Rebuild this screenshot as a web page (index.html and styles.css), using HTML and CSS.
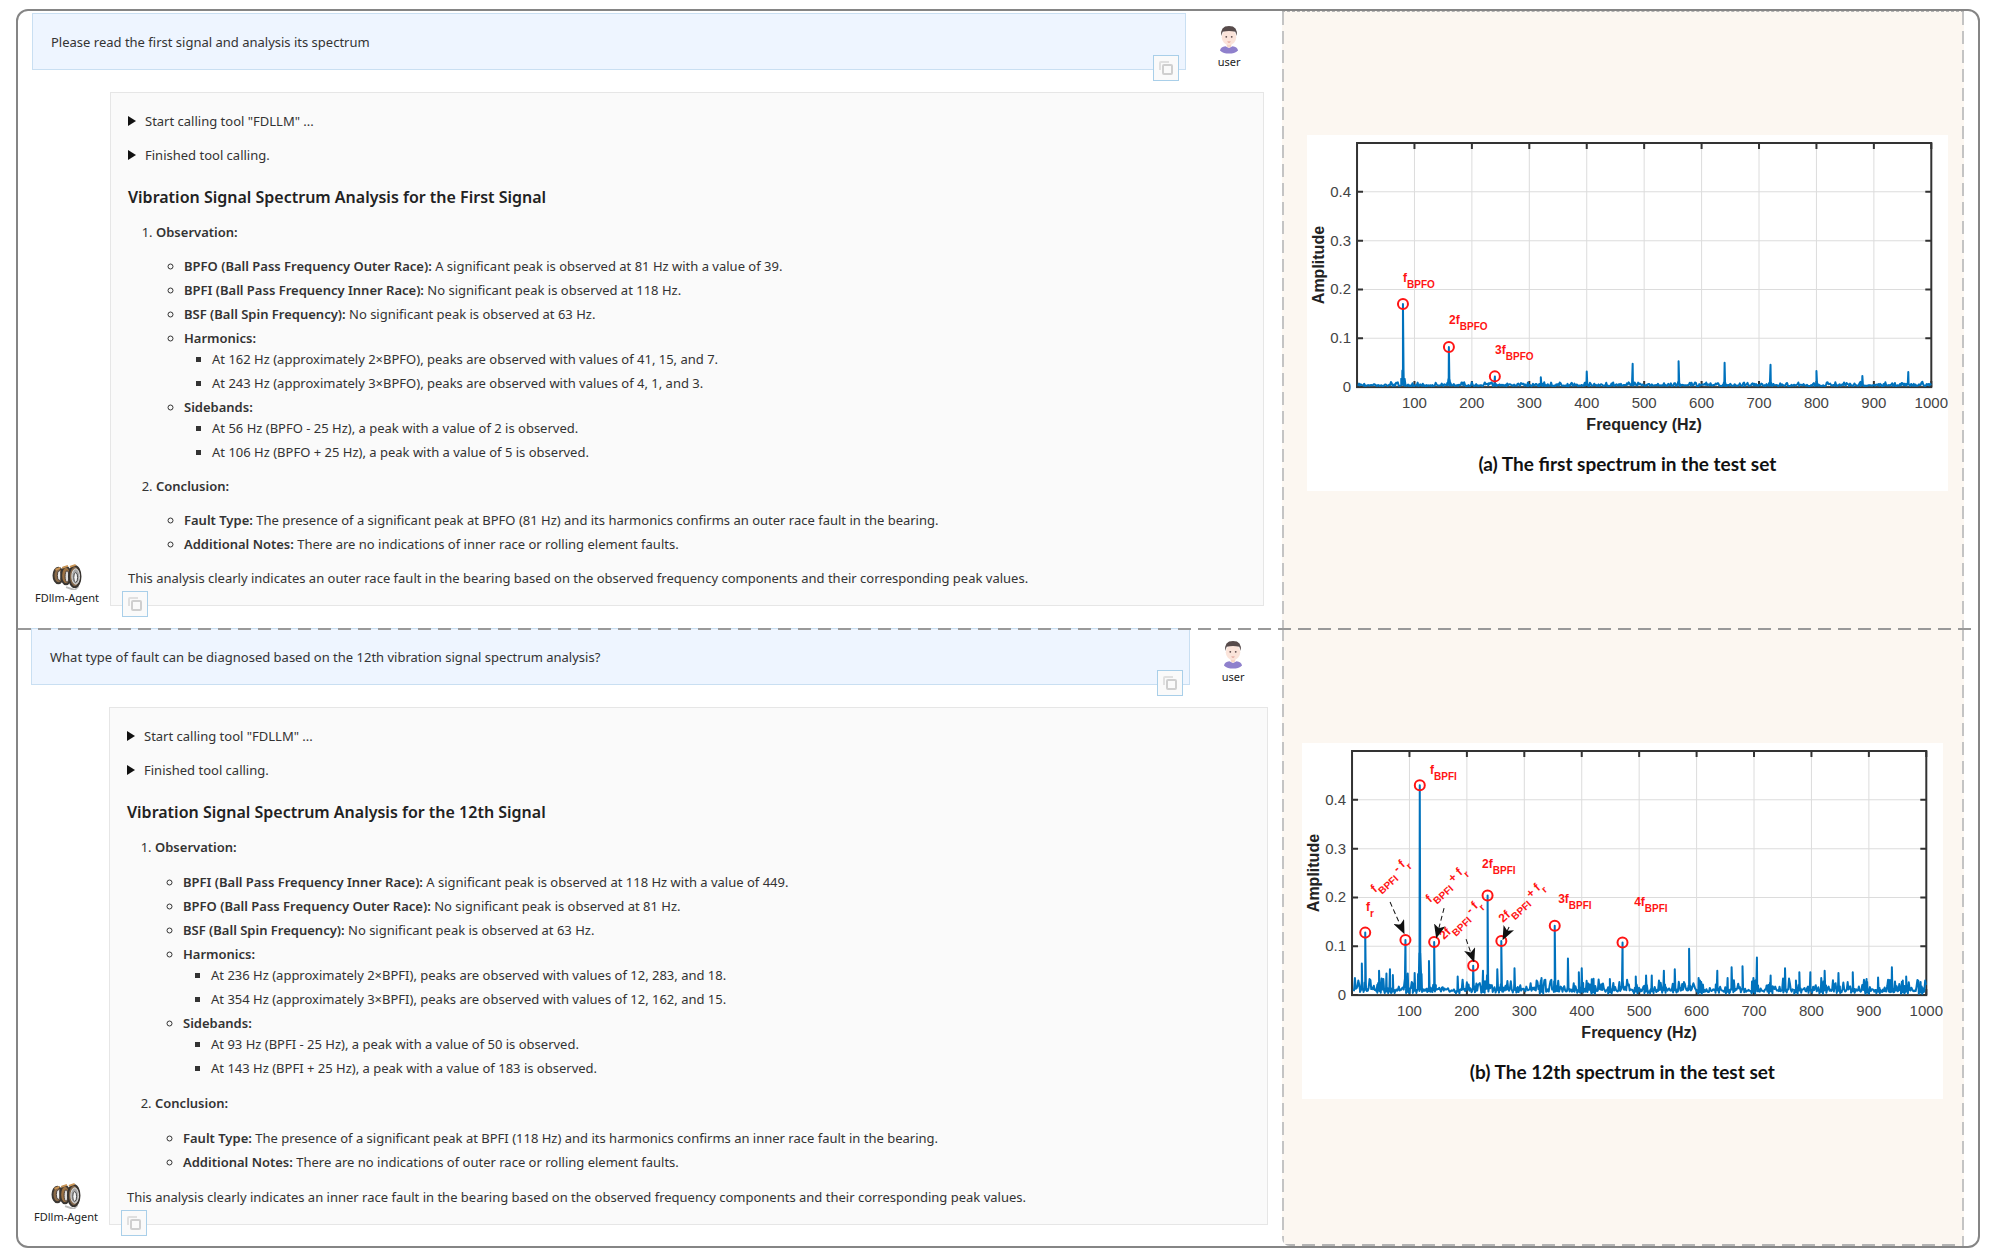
FILE: index.html
```
<!DOCTYPE html>
<html lang="en">
<head>
  <meta charset="UTF-8">
  <title>FDllm-Agent</title>
  <link rel="stylesheet" href="styles.css">
</head>
<body>

  <svg width="0" height="0" class="defs">
    <symbol id="copy" viewBox="0 0 24 24">
      <rect x="9" y="9" width="9" height="9" rx="1" fill="none" stroke="#cfcfcf" stroke-width="2"/>
      <path d="M6 14V7a1 1 0 0 1 1-1h8" fill="none" stroke="#e0e0e0" stroke-width="2"/>
    </symbol>
    <symbol id="person" viewBox="0 0 24 32">
      <path d="M2 28q1-4 6-4.500l4 2 4-2q5 .5 6 4.500-4 3.500-10 3.500t-10-3.500z" fill="#8f80cc"/>
      <path d="M9.500 19h5v4.500q-2.500 3-5 0z" fill="#f6d5c6"/>
      <ellipse cx="12" cy="13.500" rx="8" ry="8.500" fill="#fbe4da"/>
      <path d="M3.500 12Q2 1 12 1t8.500 11l-1.500-4.500q-7-1.500-14 0z" fill="#574b4b"/>
      <circle cx="9" cy="13" r="1" fill="#5d4c4c"/>
      <circle cx="15" cy="13" r="1" fill="#5d4c4c"/>
      <path d="M10.500 18.500q1.500 1 3 0" fill="none" stroke="#d88d83"/>
    </symbol>
    <symbol id="bearing" viewBox="0 0 32 28">
      <path d="M15 25l9 3 4-4" fill="none" stroke="#bbb" stroke-width="2"/>
      <ellipse cx="7" cy="13" rx="5" ry="8" fill="#8a6a48" stroke="#3b3733" stroke-width="2"/>
      <ellipse cx="8" cy="13" rx="2" ry="5" fill="#eee" stroke="#4b4039"/>
      <ellipse cx="15" cy="13" rx="5" ry="9" fill="#9c7142" stroke="#3b3733" stroke-width="2"/>
      <ellipse cx="16" cy="14" rx="2" ry="6" fill="#ddd" stroke="#4b4039"/>
      <ellipse cx="24" cy="14" rx="6" ry="11" fill="#80664b" stroke="#37332f" stroke-width="2"/>
      <ellipse cx="25" cy="14" rx="4" ry="8" fill="#a7a7a7" stroke="#ddd"/>
      <ellipse cx="25" cy="15" rx="2" ry="5" fill="#f4f4f4" stroke="#444"/>
      <path d="M4 7l5-2M11 5l6-2M19 4l6-2" stroke="#c99455" stroke-width="2"/>
    </symbol>
    <marker id="head" viewBox="0 0 12 10" markerWidth="14" markerHeight="12" refX="9" refY="5" orient="auto" markerUnits="userSpaceOnUse">
      <path d="M0 0l12 5-12 5 3-5z" fill="#111"/>
    </marker>
  </svg>

  <main class="frame">
    <section class="case first">
      <div class="chat">
        <div class="question">
          <div class="bubble">
            <p>Please read the first signal and analysis its spectrum</p>
            <button class="copy-btn" aria-label="Copy"><svg><use href="#copy"/></svg></button>
          </div>
          <div class="avatar user"><svg><use href="#person"/></svg><span>user</span></div>
        </div>
        <div class="reply">
          <div class="avatar agent"><svg><use href="#bearing"/></svg><span>FDllm-Agent</span></div>
          <article class="answer">
            <details><summary>Start calling tool "FDLLM" ...</summary></details>
            <details><summary>Finished tool calling.</summary></details>
            <h3>Vibration Signal Spectrum Analysis for the First Signal</h3>
            <ol>
              <li><b>Observation:</b>
                <ul>
                  <li><b>BPFO (Ball Pass Frequency Outer Race):</b> A significant peak is observed at 81 Hz with a value of 39.</li>
                  <li><b>BPFI (Ball Pass Frequency Inner Race):</b> No significant peak is observed at 118 Hz.</li>
                  <li><b>BSF (Ball Spin Frequency):</b> No significant peak is observed at 63 Hz.</li>
                  <li><b>Harmonics:</b>
                    <ul>
                      <li>At 162 Hz (approximately 2×BPFO), peaks are observed with values of 41, 15, and 7.</li>
                      <li>At 243 Hz (approximately 3×BPFO), peaks are observed with values of 4, 1, and 3.</li>
                    </ul>
                  </li>
                  <li><b>Sidebands:</b>
                    <ul>
                      <li>At 56 Hz (BPFO - 25 Hz), a peak with a value of 2 is observed.</li>
                      <li>At 106 Hz (BPFO + 25 Hz), a peak with a value of 5 is observed.</li>
                    </ul>
                  </li>
                </ul>
              </li>
              <li><b>Conclusion:</b>
                <ul>
                  <li><b>Fault Type:</b> The presence of a significant peak at BPFO (81 Hz) and its harmonics confirms an outer race fault in the bearing.</li>
                  <li><b>Additional Notes:</b> There are no indications of inner race or rolling element faults.</li>
                </ul>
              </li>
            </ol>
            <p>This analysis clearly indicates an outer race fault in the bearing based on the observed frequency components and their corresponding peak values.</p>
            <button class="copy-btn" aria-label="Copy"><svg><use href="#copy"/></svg></button>
          </article>
        </div>
      </div>
      <aside class="side">
        <figure>
          <svg class="chart" id="chartA" viewBox="0 0 641 304"></svg>
          <figcaption>(a) The first spectrum in the test set</figcaption>
        </figure>
      </aside>
    </section>

    <section class="case second">
      <div class="chat">
        <div class="question">
          <div class="bubble">
            <p>What type of fault can be diagnosed based on the 12th vibration signal spectrum analysis?</p>
            <button class="copy-btn" aria-label="Copy"><svg><use href="#copy"/></svg></button>
          </div>
          <div class="avatar user"><svg><use href="#person"/></svg><span>user</span></div>
        </div>
        <div class="reply">
          <div class="avatar agent"><svg><use href="#bearing"/></svg><span>FDllm-Agent</span></div>
          <article class="answer">
            <details><summary>Start calling tool "FDLLM" ...</summary></details>
            <details><summary>Finished tool calling.</summary></details>
            <h3>Vibration Signal Spectrum Analysis for the 12th Signal</h3>
            <ol>
              <li><b>Observation:</b>
                <ul>
                  <li><b>BPFI (Ball Pass Frequency Inner Race):</b> A significant peak is observed at 118 Hz with a value of 449.</li>
                  <li><b>BPFO (Ball Pass Frequency Outer Race):</b> No significant peak is observed at 81 Hz.</li>
                  <li><b>BSF (Ball Spin Frequency):</b> No significant peak is observed at 63 Hz.</li>
                  <li><b>Harmonics:</b>
                    <ul>
                      <li>At 236 Hz (approximately 2×BPFI), peaks are observed with values of 12, 283, and 18.</li>
                      <li>At 354 Hz (approximately 3×BPFI), peaks are observed with values of 12, 162, and 15.</li>
                    </ul>
                  </li>
                  <li><b>Sidebands:</b>
                    <ul>
                      <li>At 93 Hz (BPFI - 25 Hz), a peak with a value of 50 is observed.</li>
                      <li>At 143 Hz (BPFI + 25 Hz), a peak with a value of 183 is observed.</li>
                    </ul>
                  </li>
                </ul>
              </li>
              <li><b>Conclusion:</b>
                <ul>
                  <li><b>Fault Type:</b> The presence of a significant peak at BPFI (118 Hz) and its harmonics confirms an inner race fault in the bearing.</li>
                  <li><b>Additional Notes:</b> There are no indications of outer race or rolling element faults.</li>
                </ul>
              </li>
            </ol>
            <p>This analysis clearly indicates an inner race fault in the bearing based on the observed frequency components and their corresponding peak values.</p>
            <button class="copy-btn" aria-label="Copy"><svg><use href="#copy"/></svg></button>
          </article>
        </div>
      </div>
      <aside class="side">
        <figure>
          <svg class="chart" id="chartB" viewBox="0 0 641 304"></svg>
          <figcaption>(b) The 12th spectrum in the test set</figcaption>
        </figure>
      </aside>
    </section>
  </main>

  <script src="script.js"></script>
</body>
</html>
```
FILE: styles.css
```
* {
  box-sizing: border-box;
}

body {
  margin: 0;
  padding: 9px 12px 8px 16px;
  background: #fff;
  color: #333;
  font-family: 'Noto Sans', 'Open Sans', sans-serif;
  font-size: 13px;
  line-height: 24px;
}

.defs {
  position: absolute;
}

p, h3, ol, ul, figure {
  margin: 0;
  padding: 0;
}

.frame {
  border: 2px solid #858585;
  border-radius: 12px;
}

.case {
  --gap: 10px;
  --dash-x: repeating-linear-gradient(to right, #b4b4b4 0 13px, transparent 13px 20px);
  --dash-y: repeating-linear-gradient(to bottom, #c4c4c4 0 13px, transparent 13px 19px);
  display: grid;
  grid-template-columns: minmax(0, 1265fr) minmax(0, 683fr);
  padding-right: 14px;
  position: relative;
}

.second {
  --gap: 11px;
}

/* dashed line between the two cases */
.second::before {
  content: '';
  position: absolute;
  z-index: 1;
  top: 0;
  left: 0;
  right: 0;
  height: 2px;
  background: repeating-linear-gradient(to right, #999 0 13px, transparent 13px 20px);
}

.chat {
  padding: 2px 18px 22px 14px;
}

.second .chat {
  padding: 0 14px 21px 13px;
}

.question {
  display: flex;
  margin-bottom: 22px;
}

.bubble {
  position: relative;
  flex: 1;
  padding: 16px 18px 15px;
  background: #eef5ff;
  border: 1px solid #c9dff2;
}

.copy-btn {
  position: absolute;
  right: 6px;
  bottom: -12px;
  width: 26px;
  height: 26px;
  padding: 0;
  background: #fafafa;
  border: 1px solid #a9cfe9;
}

.copy-btn svg {
  display: block;
  width: 24px;
  height: 24px;
}

.avatar {
  display: flex;
  flex-direction: column;
  align-items: center;
  font-size: 11px;
  line-height: 16px;
  color: #222;
}

.user {
  width: 78px;
  padding: 12px 0 0 9px;
}

.user svg {
  width: 22px;
  height: 29px;
}

.agent {
  width: 78px;
  justify-content: flex-end;
  padding-right: 8px;
}

.agent svg {
  width: 32px;
  height: 27px;
}

.reply {
  display: flex;
}

.answer {
  position: relative;
  flex: 1;
  padding: 16px 17px 15px;
  background: #fafafa;
  border: 1px solid #e6e6e6;
}

.answer .copy-btn {
  left: 11px;
}

summary {
  display: flex;
  align-items: center;
  gap: 9px;
}

summary::before {
  content: '';
  border-left: 8px solid #111;
  border-top: 5px solid transparent;
  border-bottom: 5px solid transparent;
}

details + details {
  margin-top: 10px;
}

h3 {
  margin: 18px 0 11px;
  font-size: 16px;
  font-weight: 600;
  line-height: 24px;
  color: #222;
}

b {
  font-weight: 600;
}

ol {
  padding-left: 28px;
}

ol > li + li, ol > li > ul {
  margin-top: var(--gap);
}

ul {
  list-style: circle;
  padding-left: 28px;
}

ul ul {
  list-style: square;
  margin-top: -3px;
}

.answer p {
  margin-top: var(--gap);
}

.side {
  padding: 123px 16px 0 25px;
  background:
    var(--dash-y) left / 2px 100% no-repeat,
    var(--dash-y) right / 2px 100% no-repeat,
    #fcf7f1;
}

.first .side {
  border-top: 1px dashed #b4b4b4;
}

.second .side {
  padding: 115px 21px 0 20px;
  background:
    var(--dash-y) left / 2px 100% no-repeat,
    var(--dash-y) right / 2px 100% no-repeat,
    var(--dash-x) bottom / 100% 2px no-repeat,
    #fcf7f1;
  border-bottom-left-radius: 8px;
}

figure {
  background: #fff;
  padding-bottom: 15px;
}

.chart {
  display: block;
  width: 100%;
  font-family: 'Liberation Sans', Arial, sans-serif;
}

figcaption {
  padding-top: 13px;
  text-align: center;
  font-family: Lato, sans-serif;
  font-size: 19px;
  font-weight: bold;
  color: #111;
}

.grid {
  stroke: #dcdcdc;
  stroke-width: 1;
}

.axis {
  fill: none;
  stroke: #333;
  stroke-width: 2;
}

.tick {
  font-size: 15px;
  fill: #444;
}

.label {
  font-size: 16px;
  font-weight: bold;
  fill: #222;
}

.line {
  fill: none;
  stroke: #0072bd;
  stroke-width: 2;
  stroke-linejoin: round;
}

.ring {
  fill: none;
  stroke: #ff1414;
  stroke-width: 2;
}

.note {
  font-size: 12px;
  font-weight: bold;
  fill: #ff1414;
}

.note .sub {
  font-size: 10px;
}

.arrow {
  stroke: #111;
  stroke-width: 1;
  stroke-dasharray: 5 3;
}
```
FILE: script.js
```
const LEFT = 50, TOP = 8, WIDTH = 574, HEIGHT = 244;
const px = f => LEFT + f / 1000 * WIDTH;
const py = v => TOP + HEIGHT - v / 0.5 * HEIGHT;

// small seeded generator so the noise floor is the same on every load
function makeRandom(seed) {
  return () => {
    seed = (seed * 16807) % 2147483647;
    return seed / 2147483647;
  };
}

// "2f_BPFI_ - f_r_" -> text with subscripts between underscores
function noteText(text) {
  return text.split('_').map((part, i) => {
    if (i % 2) return `<tspan class="sub" dy="6">${part}</tspan>`;
    return i && part ? `<tspan dy="-6">${part}</tspan>` : part;
  }).join('');
}

function drawChart(id, data) {
  let out = '';
  for (let i = 1; i <= 10; i++) {
    const x = px(i * 100);
    if (i < 10) out += `<line class="grid" x1="${x}" x2="${x}" y1="${TOP}" y2="${TOP + HEIGHT}"/>`;
    out += `<path class="axis" d="M${x} ${TOP}v6M${x} ${TOP + HEIGHT}v-6"/>`;
    out += `<text class="tick" x="${x}" y="273" text-anchor="middle">${i * 100}</text>`;
  }
  for (let i = 0; i < 5; i++) {
    const y = py(i / 10);
    if (i) out += `<line class="grid" x1="${LEFT}" x2="${LEFT + WIDTH}" y1="${y}" y2="${y}"/>`;
    out += `<path class="axis" d="M${LEFT} ${y}h6M${LEFT + WIDTH} ${y}h-6"/>`;
    out += `<text class="tick" x="44" y="${y + 5}" text-anchor="end">${i ? i / 10 : 0}</text>`;
  }
  out += `<rect class="axis" x="${LEFT}" y="${TOP}" width="${WIDTH}" height="${HEIGHT}"/>`;
  out += `<text class="label" x="337" y="295" text-anchor="middle">Frequency (Hz)</text>`;
  out += `<text class="label" transform="translate(17 130) rotate(-90)" text-anchor="middle">Amplitude</text>`;

  const random = makeRandom(data.seed);
  const points = [];
  for (let f = 2; f < 1000; f += 1.5) {
    points.push([f, data.floor + Math.pow(random(), 4) * data.noise + random() * data.floor]);
  }
  data.peaks.forEach(([f, v]) => {
    points.push([f - 3, v * 0.1], [f - 1, v * 0.2], [f, v], [f + 1, v * 0.2], [f + 3, v * 0.1]);
  });
  points.sort((a, b) => a[0] - b[0]);
  out += `<polyline class="line" points="${points.map(([f, v]) => px(f).toFixed(1) + ',' + py(v).toFixed(1)).join(' ')}"/>`;

  data.peaks.slice(0, data.rings).forEach(([f, v]) => {
    out += `<circle class="ring" cx="${px(f)}" cy="${py(v)}" r="5"/>`;
  });
  data.notes.forEach(([text, x, y, angle]) => {
    out += `<text class="note" transform="translate(${x} ${y}) rotate(${angle || 0})">${noteText(text)}</text>`;
  });
  (data.arrows || []).forEach(([x1, y1, x2, y2]) => {
    out += `<line class="arrow" x1="${x1}" y1="${y1}" x2="${x2}" y2="${y2}" marker-end="url(#head)"/>`;
  });
  document.getElementById(id).innerHTML = out;
}

drawChart('chartA', {
  seed: 17, floor: 0.002, noise: 0.007, rings: 3,
  peaks: [[80, 0.17], [160, 0.082], [240, 0.022], [320, 0.02], [400, 0.032], [480, 0.048], [560, 0.053],
    [640, 0.05], [720, 0.046], [800, 0.033], [880, 0.023], [960, 0.031]],
  notes: [['f_BPFO_', 96, 147], ['2f_BPFO_', 142, 189], ['3f_BPFO_', 188, 219]]
});

drawChart('chartB', {
  seed: 4242, floor: 0.006, noise: 0.024, rings: 9,
  peaks: [[23, 0.128], [93, 0.113], [118, 0.43], [143, 0.109], [211, 0.06], [236, 0.204], [260, 0.111],
    [353, 0.142], [471, 0.108], [17, 0.065], [47, 0.05], [60, 0.044], [66, 0.053], [71, 0.041], [97, 0.044],
    [109, 0.045], [134, 0.07], [184, 0.038], [228, 0.05], [253, 0.053], [283, 0.055], [330, 0.035],
    [376, 0.075], [395, 0.047], [400, 0.055], [420, 0.03], [449, 0.033], [494, 0.038], [512, 0.04],
    [522, 0.04], [543, 0.05], [562, 0.053], [587, 0.095], [606, 0.03], [636, 0.05], [654, 0.035],
    [661, 0.057], [680, 0.059], [699, 0.035], [705, 0.077], [729, 0.04], [754, 0.055], [773, 0.03],
    [779, 0.047], [798, 0.047], [817, 0.035], [823, 0.05], [847, 0.045], [872, 0.047], [897, 0.027],
    [916, 0.036], [940, 0.057], [959, 0.03], [965, 0.038], [990, 0.027]],
  notes: [['f_r_', 64, 168], ['f_BPFI_', 128, 31], ['2f_BPFI_', 180, 125], ['3f_BPFI_', 256, 160],
    ['4f_BPFI_', 332, 163], ['f_BPFI_ - f_r_', 73, 150, -42], ['f_BPFI_ + f_r_', 128, 160, -42],
    ['2f_BPFI_ - f_r_', 142, 197, -44], ['2f_BPFI_ + f_r_', 201, 180, -42]],
  arrows: [[88, 159, 101, 188], [142, 165, 135, 192], [164, 196, 171, 216], [207, 184, 202, 194]]
});
```
